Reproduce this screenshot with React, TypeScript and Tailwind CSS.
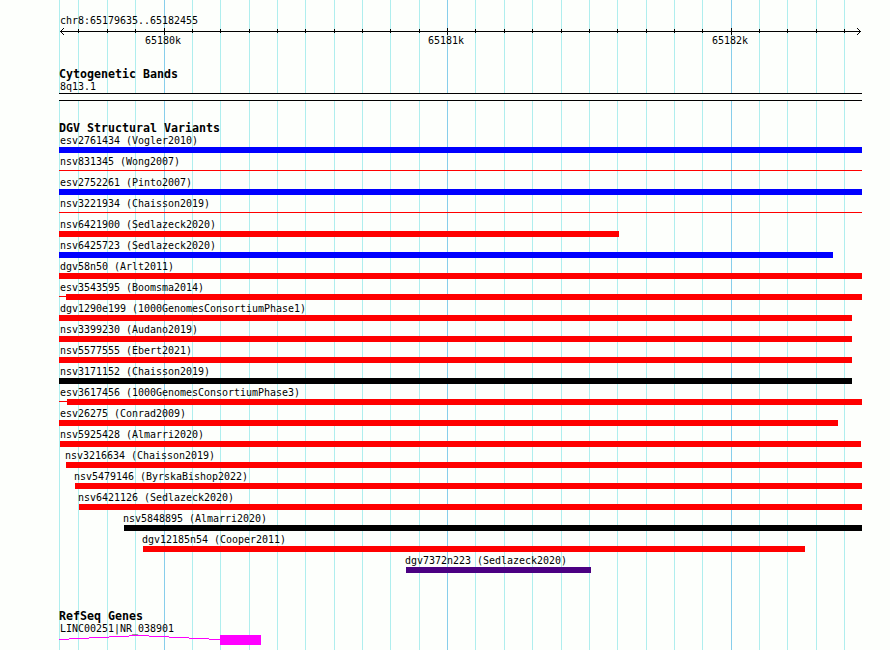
import type { ReactNode } from "react";

const MINOR_LINES = [
  78, 107, 135, 192, 220, 249, 277, 305, 334, 362, 390, 419, 475, 504, 532,
  561, 589, 617, 646, 674, 702, 759, 787, 816, 844,
];

const MAJOR_LINES = [
  { x: 164, label: "65180k", labelClass: "ml-[145px]" },
  { x: 447, label: "65181k", labelClass: "ml-[247px]" },
  { x: 731, label: "65182k", labelClass: "ml-[248px]" },
];

interface Variant {
  name: string;
  start: number;
  end: number;
  color: string;
  thin?: boolean;
  // x where a thin lead-in line starts, left of the bar
  lead?: number;
}

const variants: Variant[] = [
  { name: "esv2761434 (Vogler2010)", start: 59, end: 862, color: "bg-[#0000ff]" },
  { name: "nsv831345 (Wong2007)", start: 59, end: 862, color: "bg-[#ff0000]", thin: true },
  { name: "esv2752261 (Pinto2007)", start: 59, end: 862, color: "bg-[#0000ff]" },
  { name: "nsv3221934 (Chaisson2019)", start: 59, end: 862, color: "bg-[#ff0000]", thin: true },
  { name: "nsv6421900 (Sedlazeck2020)", start: 59, end: 619, color: "bg-[#ff0000]" },
  { name: "nsv6425723 (Sedlazeck2020)", start: 59, end: 833, color: "bg-[#0000ff]" },
  { name: "dgv58n50 (Arlt2011)", start: 59, end: 862, color: "bg-[#ff0000]" },
  { name: "esv3543595 (Boomsma2014)", start: 66, end: 862, color: "bg-[#ff0000]", lead: 59 },
  { name: "dgv1290e199 (1000GenomesConsortiumPhase1)", start: 59, end: 852, color: "bg-[#ff0000]" },
  { name: "nsv3399230 (Audano2019)", start: 59, end: 852, color: "bg-[#ff0000]" },
  { name: "nsv5577555 (Ebert2021)", start: 59, end: 852, color: "bg-[#ff0000]" },
  { name: "nsv3171152 (Chaisson2019)", start: 59, end: 852, color: "bg-black" },
  { name: "esv3617456 (1000GenomesConsortiumPhase3)", start: 67, end: 862, color: "bg-[#ff0000]", lead: 59 },
  { name: "esv26275 (Conrad2009)", start: 59, end: 838, color: "bg-[#ff0000]" },
  { name: "nsv5925428 (Almarri2020)", start: 60, end: 861, color: "bg-[#ff0000]" },
  { name: "nsv3216634 (Chaisson2019)", start: 66, end: 862, color: "bg-[#ff0000]" },
  { name: "nsv5479146 (ByrskaBishop2022)", start: 75, end: 862, color: "bg-[#ff0000]" },
  { name: "nsv6421126 (Sedlazeck2020)", start: 79, end: 862, color: "bg-[#ff0000]" },
  { name: "nsv5848895 (Almarri2020)", start: 124, end: 862, color: "bg-black" },
  { name: "dgv12185n54 (Cooper2011)", start: 143, end: 805, color: "bg-[#ff0000]" },
  { name: "dgv7372n223 (Sedlazeck2020)", start: 406, end: 591, color: "bg-[#4b0082]" },
];

function Grid() {
  return (
    <svg className="absolute inset-0" width="890" height="650" shapeRendering="crispEdges" aria-hidden>
      {[59, ...MINOR_LINES].map((x) => (
        <rect key={x} x={x} y="0" width="1" height="650" fill="#afeeee" />
      ))}
      {MAJOR_LINES.map(({ x }) => (
        <rect key={x} x={x} y="0" width="1" height="650" fill="#87ceeb" />
      ))}
    </svg>
  );
}

function Ruler() {
  return (
    <svg className="block" width="890" height="9" shapeRendering="crispEdges" aria-hidden>
      <rect x="60" y="4" width="801" height="1" />
      {MINOR_LINES.map((x) => (
        <rect key={x} x={x} y="2" width="1" height="4" />
      ))}
      {MAJOR_LINES.map(({ x }) => (
        <rect key={x} x={x} y="1" width="1" height="7" />
      ))}
      {[1, 2, 3].map((d) => (
        <g key={d}>
          <rect x={60 + d} y={4 - d} width="1" height="1" />
          <rect x={60 + d} y={4 + d} width="1" height="1" />
          <rect x={860 - d} y={4 - d} width="1" height="1" />
          <rect x={860 - d} y={4 + d} width="1" height="1" />
        </g>
      ))}
    </svg>
  );
}

function TrackTitle({ children }: { children: ReactNode }) {
  return (
    <h2 className="ml-[59px] h-[13px] text-[11.63px] leading-[13px] font-bold">{children}</h2>
  );
}

function VariantRow({ name, start, end, color, thin, lead }: Variant) {
  const left = lead ?? start;
  return (
    <div className="h-[21px]">
      <p className="h-3 leading-3" style={{ marginLeft: Math.max(60, left - 1) }}>
        {name}
      </p>
      <div className="flex h-[6px] items-center" style={{ marginLeft: left }}>
        {lead !== undefined && (
          <div className={`mb-px h-px ${color}`} style={{ width: start - lead }} />
        )}
        <div className={`${thin ? "mb-px h-px" : "h-[6px]"} ${color}`} style={{ width: end - start }} />
      </div>
    </div>
  );
}

export default function App() {
  return (
    <main className="relative h-[650px] w-[890px] overflow-hidden bg-[#fdfffc] font-['DejaVu_Sans_Mono',monospace] text-[9.97px] whitespace-pre text-black">
      <Grid />
      <div className="relative">
        <header className="h-[68px] pt-[15px]">
          <p className="ml-[60px] h-3 leading-3">chr8:65179635..65182455</p>
          <Ruler />
          <div className="-mt-px flex leading-3">
            {MAJOR_LINES.map(({ label, labelClass }) => (
              <span key={label} className={`w-9 ${labelClass}`}>{label}</span>
            ))}
          </div>
        </header>

        <section className="h-[54px]">
          <TrackTitle>Cytogenetic Bands</TrackTitle>
          <p className="ml-[60px] h-3 leading-3">8q13.1</p>
          <div className="ml-[59px] h-2 w-[803px] border-y border-black bg-[#fdfffc]" />
        </section>

        <section className="h-[488px]">
          <TrackTitle>DGV Structural Variants</TrackTitle>
          {variants.map((v) => (
            <VariantRow key={v.name} {...v} />
          ))}
        </section>

        <section>
          <TrackTitle>RefSeq Genes</TrackTitle>
          <p className="ml-[60px] h-3 leading-3">LINC00251|NR_038901</p>
          <svg className="block" width="890" height="10" shapeRendering="crispEdges" aria-hidden>
            <path
              d="M59 4.5h10m0-1h20m0-1h20m0-1h20m0-1h20m0 1h20m0 1h20m0 1h20m0 1h11"
              fill="none"
              stroke="#ff00ff"
            />
            <rect x="220" y="0" width="41" height="10" fill="#ff00ff" />
          </svg>
        </section>
      </div>
    </main>
  );
}
